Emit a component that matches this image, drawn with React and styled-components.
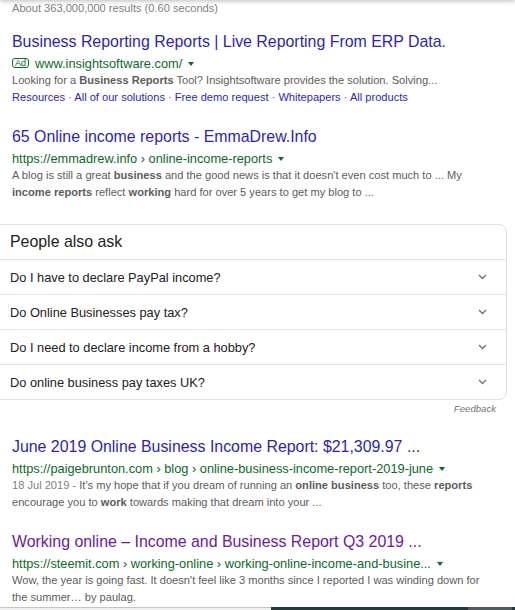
import React from "react";
import styled, { createGlobalStyle } from "styled-components";

const GlobalStyle = createGlobalStyle`
  html, body {
    margin: 0;
    padding: 0;
    background: #ffffff;
  }
  body {
    font-family: "Liberation Sans", Arial, sans-serif;
    overflow: hidden;
  }
`;

const results = [
  {
    title: "Business Reporting Reports | Live Reporting From ERP Data.",
    ad: true,
    url: "www.insightsoftware.com/",
    snippet: [
      "Looking for a ",
      { b: "Business Reports" },
      " Tool? Insightsoftware provides the solution. Solving...",
    ],
    sitelinks: [
      "Resources",
      "All of our solutions",
      "Free demo request",
      "Whitepapers",
      "All products",
    ],
  },
  {
    title: "65 Online income reports - EmmaDrew.Info",
    url: "https://emmadrew.info › online-income-reports",
    snippet: [
      "A blog is still a great ",
      { b: "business" },
      " and the good news is that it doesn't even cost much to ... My ",
      { b: "income reports" },
      " reflect ",
      { b: "working" },
      " hard for over 5 years to get my blog to ...",
    ],
  },
];

const moreResults = [
  {
    title: "June 2019 Online Business Income Report: $21,309.97 ...",
    url: "https://paigebrunton.com › blog › online-business-income-report-2019-june",
    date: "18 Jul 2019 - ",
    snippet: [
      "It's my hope that if you dream of running an ",
      { b: "online business" },
      " too, these ",
      { b: "reports" },
      " encourage you to ",
      { b: "work" },
      " towards making that dream into your ...",
    ],
  },
  {
    title: "Working online – Income and Business Report Q3 2019 ...",
    visited: true,
    url: "https://steemit.com › working-online › working-online-income-and-busine...",
    snippet: [
      "Wow, the year is going fast. It doesn't feel like 3 months since I reported I was winding down for the summer… by paulag.",
    ],
  },
];

const questions = [
  "Do I have to declare PayPal income?",
  "Do Online Businesses pay tax?",
  "Do I need to declare income from a hobby?",
  "Do online business pay taxes UK?",
];

const Result = ({ data }) => (
  <ResultBlock>
    <Title $visited={data.visited}>{data.title}</Title>
    <UrlLine>
      {data.ad && <AdBadge>Ad</AdBadge>}
      <span>{data.url}</span>
      <Caret />
    </UrlLine>
    <Snippet>
      {data.date && <DateText>{data.date}</DateText>}
      {data.snippet.map((part, i) =>
        typeof part === "string" ? (
          <React.Fragment key={i}>{part}</React.Fragment>
        ) : (
          <b key={i}>{part.b}</b>
        )
      )}
    </Snippet>
    {data.sitelinks && (
      <Sitelinks>
        {data.sitelinks.map((link, i) => (
          <React.Fragment key={link}>
            {i > 0 && <Dot> · </Dot>}
            <a>{link}</a>
          </React.Fragment>
        ))}
      </Sitelinks>
    )}
  </ResultBlock>
);

const Chevron = () => (
  <svg width="9" height="6" viewBox="0 0 9 6">
    <path d="M1 1l3.5 3.5L8 1" fill="none" stroke="#70757a" strokeWidth="1.4" />
  </svg>
);

const App = () => {
  return (
    <>
      <GlobalStyle />
      <TopShadow />
      <Page>
        <Stats>About 363,000,000 results (0.60 seconds)</Stats>
        {results.map((r) => (
          <Result key={r.title} data={r} />
        ))}
        <AskBox>
          <AskHeading>People also ask</AskHeading>
          {questions.map((q) => (
            <Question key={q}>
              <span>{q}</span>
              <Chevron />
            </Question>
          ))}
        </AskBox>
        <Feedback>Feedback</Feedback>
        {moreResults.map((r) => (
          <Result key={r.title} data={r} />
        ))}
      </Page>
      <BottomStrip>
        <StripPart $w="271px" $bg="#f0f0f0" $line />
        <StripPart $w="197px" $bg="#1f3b40" />
        <StripPart $w="44px" $bg="#4e5d63" />
        <StripPart $w="3px" $bg="#1f3b40" />
      </BottomStrip>
    </>
  );
};

const Page = styled.div`
  width: 515px;
  height: 610px;
  box-sizing: border-box;
  padding-left: 12px;
  display: flex;
  flex-direction: column;
`;

const TopShadow = styled.div`
  position: fixed;
  top: -6px;
  left: 0;
  right: 0;
  height: 6px;
  box-shadow: 0 1px 5px rgba(0, 0, 0, 0.28);
  z-index: 2;
`;

const Stats = styled.div`
  font-size: 11.1px;
  line-height: 16px;
  color: #808080;
  margin-bottom: 13px;
`;

const ResultBlock = styled.div`
  margin-bottom: 18px;
`;

const Title = styled.div`
  font-size: 15.9px;
  line-height: 25px;
  color: ${(p) => (p.$visited ? "#6a1aa6" : "#2b1fbd")};
  white-space: nowrap;
`;

const UrlLine = styled.div`
  display: flex;
  align-items: center;
  height: 18px;
  font-size: 12.8px;
  color: #0b6a28;
  white-space: nowrap;
`;

const AdBadge = styled.span`
  display: inline-flex;
  align-items: center;
  justify-content: center;
  box-sizing: border-box;
  width: 17px;
  height: 10px;
  margin-right: 6px;
  border: 1px solid #0b6a28;
  border-radius: 3px;
  font-size: 9px;
  line-height: 8px;
  color: #0b6a28;
`;

const Caret = styled.span`
  width: 0;
  height: 0;
  margin-left: 6px;
  margin-top: 1px;
  border-left: 3px solid transparent;
  border-right: 3px solid transparent;
  border-top: 4px solid #0b6a28;
`;

const Snippet = styled.div`
  width: 478px;
  font-size: 11.1px;
  line-height: 17px;
  color: #5c5c5c;

  b {
    font-weight: bold;
    color: #5c5c5c;
  }
`;

const DateText = styled.span`
  color: #808080;
`;

const Sitelinks = styled.div`
  font-size: 11.1px;
  line-height: 17px;
  color: #2b1fbd;
  white-space: nowrap;
`;

const Dot = styled.span`
  color: #5c5c5c;
`;

const AskBox = styled.div`
  width: 513px;
  box-sizing: border-box;
  margin-left: -18px;
  margin-top: 5px;
  border: 1px solid #dfe1e5;
  border-radius: 8px;
  background: #ffffff;
`;

const AskHeading = styled.div`
  height: 34px;
  display: flex;
  align-items: center;
  padding-left: 15px;
  font-size: 15.9px;
  color: #222222;
`;

const Question = styled.div`
  height: 34px;
  display: flex;
  align-items: center;
  justify-content: space-between;
  padding: 0 19px 0 15px;
  border-top: 1px solid #e4e4e4;
  font-size: 12.8px;
  color: #222222;
`;

const Feedback = styled.div`
  align-self: flex-end;
  margin: 1px 19px 17px 0;
  font-size: 9.6px;
  line-height: 16px;
  font-style: italic;
  color: #70757a;
`;

const BottomStrip = styled.div`
  position: fixed;
  left: 0;
  bottom: 0;
  width: 515px;
  height: 3px;
  display: flex;
`;

const StripPart = styled.div`
  width: ${(p) => p.$w};
  height: 3px;
  box-sizing: border-box;
  background: ${(p) => p.$bg};
  border-top: ${(p) => (p.$line ? "1px solid #c4c4c4" : "none")};
`;

export default App;
